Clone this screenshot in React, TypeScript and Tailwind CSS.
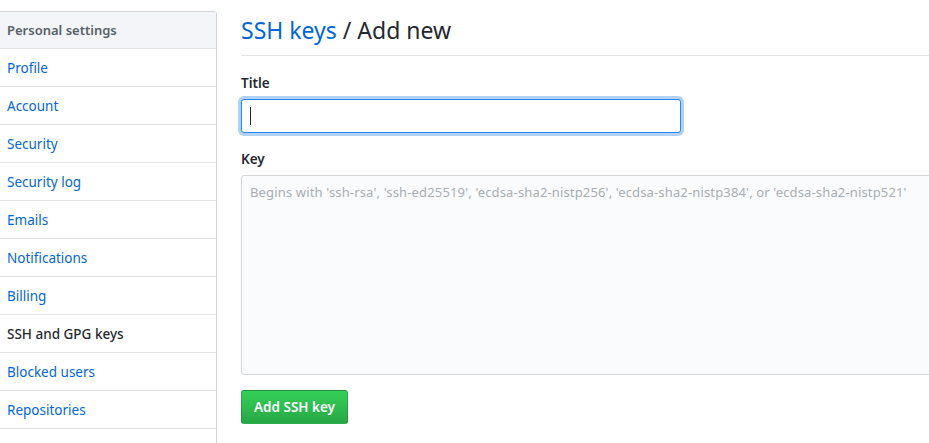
import React from "react";

const items = [
  "Profile",
  "Account",
  "Security",
  "Security log",
  "Emails",
  "Notifications",
  "Billing",
  "SSH and GPG keys",
  "Blocked users",
  "Repositories",
];

export default function App() {
  return (
    <div
      className="w-[929px] h-[443px] overflow-hidden bg-white flex items-start"
      style={{ fontFamily: '"Noto Sans", "Open Sans", sans-serif' }}
    >
      <nav className="ml-[-10px] mt-[11px] w-[227px] shrink-0 border border-[#d1d5da] rounded-[3px] bg-white">
        <div className="h-[37px] flex items-center pl-[16px] pt-[2px] bg-[#f3f5f8] border-b border-[#e1e4e8] text-[13px] font-semibold text-[#586069]">
          Personal settings
        </div>
        {items.map((it) => (
          <div
            key={it}
            className={
              "h-[38px] flex items-center pl-[16px] pt-[2px] border-b border-[#e1e4e8] text-[13.5px] " +
              (it === "SSH and GPG keys"
                ? "text-[#24292e] font-medium"
                : "text-[#0366d6]")
            }
          >
            {it}
          </div>
        ))}
        <div className="h-[38px]" />
      </nav>

      <main className="ml-[24px] flex-1 min-w-0">
        <div className="mt-[12px] pb-[7px] border-b border-[#e1e4e8] text-[23px] leading-[36px] text-[#24292e]">
          <span className="text-[#0366d6]">SSH keys</span> / Add new
        </div>

        <div className="mt-[17px] text-[13.5px] font-semibold text-[#24292e] leading-[20px]">
          Title
        </div>
        <div className="mt-[6px] w-[440px] h-[34px] rounded-[3px] border border-[#2188ff] shadow-[0_0_0_3px_rgba(3,102,214,0.3)] bg-white flex items-center pl-[8px]">
          <div className="w-[1px] h-[18px] bg-[#24292e]" />
        </div>

        <div className="mt-[16px] text-[13.5px] font-semibold text-[#24292e] leading-[20px]">
          Key
        </div>
        <div className="mt-[6px] w-[760px] h-[200px] rounded-[3px] border border-[#d1d5da] bg-[#fafbfc] px-[8px] pt-[6px] text-[13px] leading-[20px] text-[#a8aeb4] tracking-[0.15px] whitespace-nowrap">
          Begins with 'ssh-rsa', 'ssh-ed25519', 'ecdsa-sha2-nistp256', 'ecdsa-sha2-nistp384', or 'ecdsa-sha2-nistp521'
        </div>

        <button className="mt-[15px] h-[34px] px-[12px] rounded-[3px] border border-[rgba(27,31,35,0.2)] bg-gradient-to-b from-[#34d058] to-[#28a745] text-white text-[13.5px] font-semibold leading-[20px]">
          Add SSH key
        </button>
      </main>
    </div>
  );
}
